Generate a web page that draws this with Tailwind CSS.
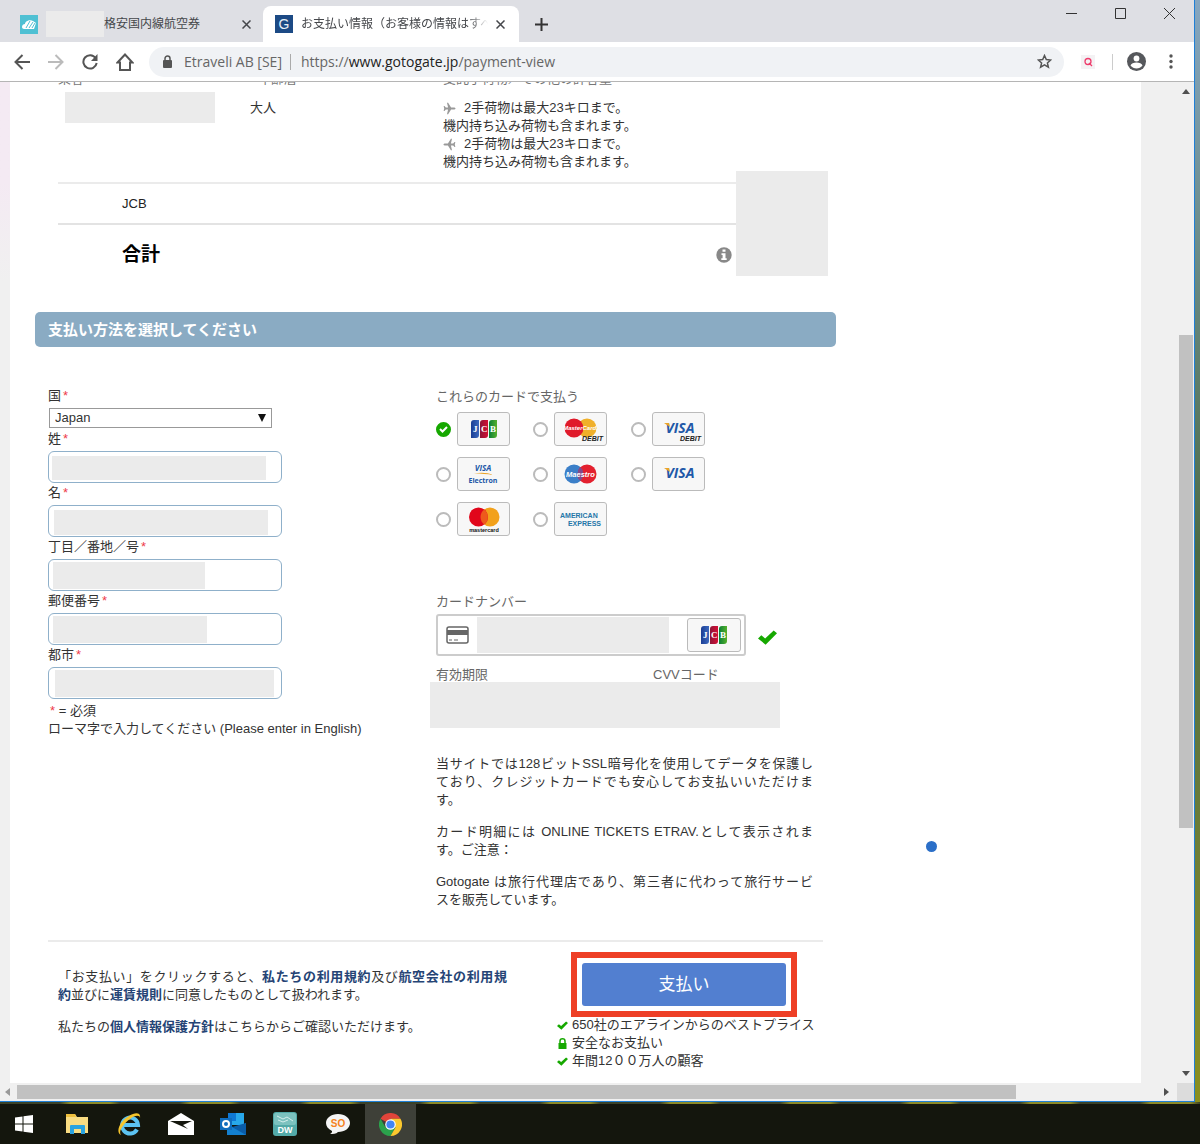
<!DOCTYPE html>
<html lang="ja">
<head>
    <meta charset="UTF-8">
    <meta name="viewport" content="width=device-width, initial-scale=1.0">
    <script src="https://cdn.jsdelivr.net/npm/@tailwindcss/browser@4"></script>
    <title>お支払い情報</title>
</head>
<body class="h-screen flex flex-col overflow-hidden bg-[#14160d] font-['Liberation_Sans','Noto_Sans_CJK_JP',sans-serif] text-[13px] leading-[18px] text-[#333]">
    <svg class="absolute w-0 h-0">
        <defs>
            <linearGradient id="jcbBlue"><stop offset="0" stop-color="#1b3d94"/><stop offset="1" stop-color="#3a68bd"/></linearGradient>
            <linearGradient id="jcbRed"><stop offset="0" stop-color="#8e1537"/><stop offset="1" stop-color="#d40f35"/></linearGradient>
            <linearGradient id="jcbGreen"><stop offset="0" stop-color="#0b7f35"/><stop offset="1" stop-color="#55b02c"/></linearGradient>
        </defs>
        <symbol id="jcb" viewBox="0 0 26 18">
            <path d="M3 0h5v15a3 3 0 0 1-3 3H0V3a3 3 0 0 1 3-3z" fill="url(#jcbBlue)"/>
            <path d="M12 0h5v15a3 3 0 0 1-3 3H9V3a3 3 0 0 1 3-3z" fill="url(#jcbRed)"/>
            <path d="M21 0h5v15a3 3 0 0 1-3 3h-5V3a3 3 0 0 1 3-3z" fill="url(#jcbGreen)"/>
            <g fill="#fff" font-family="Liberation Serif" font-weight="700" font-size="9"><text x="2" y="12">J</text><text x="10" y="12">C</text><text x="19" y="12">B</text></g>
        </symbol>
        <symbol id="check" viewBox="0 0 20 15"><path d="M0 8.500l3.500-3.500 4 3.500L16.500 0 20 3 8 15z" fill="#16a800"/></symbol>
        <symbol id="plane" viewBox="0 0 14 14"><path d="M13.500 7c0-.7-1-1.200-2-1.200H8.700L5.500.8H4.300l1.200 5H3L1.600 4.200H.7L1.300 7 .7 9.800h.9L3 8.200h2.500l-1.200 5h1.200l3.200-5h2.800c1 0 2-.5 2-1.200z" fill="#999"/></symbol>
    </svg>

    <div class="flex-1 min-h-0 flex bg-linear-to-b from-[#86a6c0] via-[#4d6b45] to-[#8a8f1e]">
        <div class="flex-1 min-w-0 flex flex-col border-r border-b border-[#1f7fd6] bg-white">
            <!-- tabs -->
            <div class="h-[42px] flex items-end bg-[#dedfe4] shrink-0">
                <div class="w-[263px] h-9 flex items-center pl-5 pr-3 text-xs text-[#45474b]">
                    <svg class="w-[18px] h-[19px]" viewBox="0 0 18 19"><rect width="18" height="19" fill="#4fc0d3"/><path d="M2 12c0-2 1.500-3 3-3 0-3 5-5 8-3l3 2-2 6H4c-1 0-2-1-2-2z" fill="#fff"/><path d="M6 13l4-7m-1 7l4-6m-1 6l3-5" stroke="#4fc0d3"/></svg>
                    <span class="ml-2 w-[58px] h-[26px] bg-[#ebebeb]"></span>
                    <span class="flex-1 whitespace-nowrap">格安国内線航空券</span>
                    <button aria-label="閉じる"><svg class="w-[9px] h-[9px]" viewBox="0 0 9 9"><path d="M.5.5l8 8m0-8l-8 8" stroke="#45474b" stroke-width="1.500"/></svg></button>
                </div>
                <div class="w-[256px] h-9 flex items-center pl-3 pr-3 rounded-t-lg bg-white text-xs text-[#45474b]">
                    <svg class="w-[18px] h-[18px]" viewBox="0 0 18 18"><rect width="18" height="18" fill="#1c4a85"/><text x="9" y="14" text-anchor="middle" fill="#e8eef5" font-size="14">G</text></svg>
                    <span class="ml-2 w-[187px] overflow-hidden whitespace-nowrap mask-r-from-90%">お支払い情報（お客様の情報はすべ</span>
                    <button class="ml-2" aria-label="閉じる"><svg class="w-[9px] h-[9px]" viewBox="0 0 9 9"><path d="M.5.5l8 8m0-8l-8 8" stroke="#45474b" stroke-width="1.500"/></svg></button>
                </div>
                <button class="self-center ml-4 mt-1.5" aria-label="新しいタブ"><svg class="w-[13px] h-[13px]" viewBox="0 0 13 13"><path d="M6.500 0v13M0 6.500h13" stroke="#333" stroke-width="2"/></svg></button>
                <div class="self-start ml-auto mt-2 mr-[19px] flex gap-[38px]">
                    <svg class="w-[11px] h-[11px]" viewBox="0 0 11 11"><path d="M0 5.500h11" stroke="#333"/></svg>
                    <svg class="w-[11px] h-[11px]" viewBox="0 0 11 11"><path d="M.5.5h10v10H.5z" fill="none" stroke="#333"/></svg>
                    <svg class="w-[11px] h-[11px]" viewBox="0 0 11 11"><path d="M0 0l11 11m0-11L0 11" stroke="#333"/></svg>
                </div>
            </div>

            <!-- toolbar -->
            <div class="h-10 shrink-0 flex items-center border-b border-[#b5b5b5] pl-[14px] pr-[21px] font-['Open_Sans',sans-serif]">
                <button aria-label="戻る"><svg class="w-4 h-4" viewBox="0 0 16 16"><path d="M16 8H2m6.500-7L1.500 8l7 7" fill="none" stroke="#555" stroke-width="2"/></svg></button>
                <button class="ml-[18px]" aria-label="進む"><svg class="w-4 h-4" viewBox="0 0 16 16"><path d="M0 8h14M7.500 1l7 7-7 7" fill="none" stroke="#bbb" stroke-width="2"/></svg></button>
                <button class="ml-[18px]" aria-label="再読み込み"><svg class="w-4 h-4" viewBox="0 0 16 16"><path d="M13.600 4A6.700 6.700 0 1 0 14.700 9" fill="none" stroke="#555" stroke-width="2"/><path d="M15.500 0v7H9z" fill="#555"/></svg></button>
                <button class="ml-[18px]" aria-label="ホーム"><svg class="w-[18px] h-[18px]" viewBox="0 0 18 18"><path d="M1.500 9.500L9 1.500l7.500 8H14V17H4V9.500z" fill="none" stroke="#555" stroke-width="2"/></svg></button>
                <div class="ml-[15px] flex-1 h-[30px] rounded-full bg-[#f0f2f5] flex items-center pl-[14px] pr-3 text-sm text-[#666]">
                    <svg class="w-[9px] h-[13px]" viewBox="0 0 9 13"><rect y="5" width="9" height="8" rx="1" fill="#555"/><path d="M2 5V3.500a2.500 2.500 0 0 1 5 0V5" fill="none" stroke="#555" stroke-width="1.500"/></svg>
                    <span class="ml-3 whitespace-nowrap">Etraveli AB [SE]</span>
                    <span class="ml-2 mr-[10px] w-px h-4 bg-[#aaa]"></span>
                    <span class="whitespace-nowrap">https://<span class="text-[#222]">www.gotogate.jp</span>/payment-view</span>
                    <svg class="ml-auto w-[15px] h-[15px]" viewBox="0 0 15 15"><path d="M7.500 1.500l1.800 4 4.400.5-3.300 2.900 1 4.300-3.900-2.300-3.900 2.300 1-4.300L1.300 6l4.400-.5z" fill="none" stroke="#555" stroke-width="1.500"/></svg>
                </div>
                <svg class="ml-4 w-4 h-4" viewBox="0 0 16 16"><rect x="1" y="1" width="14" height="14" fill="#f4f2f4"/><circle cx="8" cy="7.500" r="3" fill="none" stroke="#ee3c6c" stroke-width="1.300"/><path d="M9 9l3 3" stroke="#ee3c6c" stroke-width="1.300"/></svg>
                <span class="ml-4 w-px h-4 bg-[#ccc]"></span>
                <svg class="ml-[14px] w-[19px] h-[19px]" viewBox="0 0 19 19"><circle cx="9.500" cy="9.500" r="9.500" fill="#56585c"/><circle cx="9.500" cy="6.500" r="2.900" fill="#fff"/><path d="M3.500 13.500c1-4 11-4 12 0-3 4-9 4-12 0z" fill="#fff"/></svg>
                <svg class="ml-[23px] w-1 h-[15px]" viewBox="0 0 4 15"><circle cx="2" cy="2" r="1.700" fill="#555"/><circle cx="2" cy="7.500" r="1.700" fill="#555"/><circle cx="2" cy="13" r="1.700" fill="#555"/></svg>
            </div>

            <!-- page and vertical scrollbar -->
            <div class="flex-1 min-h-0 flex bg-[#f0f0f0]">
                <div class="w-[10px] shrink-0 bg-linear-to-b from-[#f4eaf3] from-10% to-[#f0f0f0] to-20%"></div>
                <main class="relative flex-1 min-w-0 overflow-hidden bg-white pl-[25px]">
                    <div class="w-full max-w-[801px] flex flex-col">
                        <div class="relative -mt-3 ml-[23px] mr-2">
                            <table class="w-full table-fixed text-left">
                                <colgroup><col class="w-48"><col class="w-[193px]"><col></colgroup>
                                <thead class="text-[#777]">
                                    <tr class="h-[29px] align-top">
                                        <th class="p-0 font-normal">乗客</th>
                                        <th class="p-0 pl-2 font-normal">年齢層</th>
                                        <th class="p-0 font-normal">受託手荷物／その他の許容量</th>
                                    </tr>
                                </thead>
                                <tbody>
                                    <tr class="h-[84px] align-top">
                                        <td class="p-0"><div class="-mt-[7px] ml-[7px] w-[150px] h-[31px] bg-[#ebebeb]"></div></td>
                                        <td class="p-0">大人</td>
                                        <td class="p-0">
                                            <div class="flex items-center gap-2"><svg class="w-[13px] h-[13px]"><use href="#plane"/></svg>2手荷物は最大23キロまで。</div>
                                            <div>機内持ち込み荷物も含まれます。</div>
                                            <div class="flex items-center gap-2"><svg class="w-[13px] h-[13px] -scale-x-100"><use href="#plane"/></svg>2手荷物は最大23キロまで。</div>
                                            <div>機内持ち込み荷物も含まれます。</div>
                                        </td>
                                    </tr>
                                    <tr class="h-[41px] border-t-2 border-[#ebebeb] text-[#222]"><td colspan="3" class="p-0 pl-16">JCB</td></tr>
                                    <tr class="h-[60px] border-t-2 border-[#e3e3e3] text-black">
                                        <td class="p-0 pl-16 text-[19px] font-bold">合計</td>
                                        <td colspan="2" class="p-0 pr-24">
                                            <svg class="ml-auto w-4 h-4" viewBox="0 0 16 16"><circle cx="8" cy="8" r="7.700" fill="#888"/><path d="M6.500 2.500h3v2.300h-3zM5.500 6.200h4v5h1.200V13H5.300v-1.800h1.300V8H5.500z" fill="#fff"/></svg>
                                        </td>
                                    </tr>
                                </tbody>
                            </table>
                            <div class="absolute right-0 bottom-2 w-[92px] h-[105px] bg-[#ebebeb]"></div>
                        </div>

                        <h2 class="mt-7 h-[35px] flex items-center rounded-[5px] bg-[#8aabc3] pl-[13px] text-[15px] font-bold text-white">支払い方法を選択してください</h2>

                        <form class="mt-10">
                            <div class="flex pl-[13px]">
                                <div class="w-[388px] shrink-0">
                                    <label class="block" for="country">国<span class="ml-0.5 text-[#ee3b4b]">*</span></label>
                                    <div class="relative mt-[3px] mb-0.5 ml-px w-[223px]">
                                        <select id="country" class="block appearance-none w-full h-5 border border-[#999] pl-[5px] bg-white"><option>Japan</option></select>
                                        <svg class="absolute right-[6px] top-[6px] w-2 h-2" viewBox="0 0 8 8"><path d="M0 0h8L4 8z" fill="#111"/></svg>
                                    </div>
                                    <label class="block" for="lastName">姓<span class="ml-0.5 text-[#ee3b4b]">*</span></label>
                                    <div class="relative mt-[3px] mb-px w-[234px]">
                                        <input id="lastName" type="text" class="block w-full h-8 rounded-md border border-[#8fb0ca]">
                                        <span class="absolute left-1 top-[5px] w-[214px] h-6 bg-[#ebebeb]"></span>
                                    </div>
                                    <label class="block" for="firstName">名<span class="ml-0.5 text-[#ee3b4b]">*</span></label>
                                    <div class="relative mt-[3px] mb-px w-[234px]">
                                        <input id="firstName" type="text" class="block w-full h-8 rounded-md border border-[#8fb0ca]">
                                        <span class="absolute left-[6px] top-[5px] w-[214px] h-[25px] bg-[#ebebeb]"></span>
                                    </div>
                                    <label class="block" for="street">丁目／番地／号<span class="ml-0.5 text-[#ee3b4b]">*</span></label>
                                    <div class="relative mt-[3px] mb-px w-[234px]">
                                        <input id="street" type="text" class="block w-full h-8 rounded-md border border-[#8fb0ca]">
                                        <span class="absolute left-[5px] top-[3px] w-[152px] h-[27px] bg-[#ebebeb]"></span>
                                    </div>
                                    <label class="block" for="zip">郵便番号<span class="ml-0.5 text-[#ee3b4b]">*</span></label>
                                    <div class="relative mt-[3px] mb-px w-[234px]">
                                        <input id="zip" type="text" class="block w-full h-8 rounded-md border border-[#8fb0ca]">
                                        <span class="absolute left-[5px] top-[3px] w-[154px] h-[27px] bg-[#ebebeb]"></span>
                                    </div>
                                    <label class="block" for="city">都市<span class="ml-0.5 text-[#ee3b4b]">*</span></label>
                                    <div class="relative mt-[3px] mb-[3px] w-[234px]">
                                        <input id="city" type="text" class="block w-full h-8 rounded-md border border-[#8fb0ca]">
                                        <span class="absolute left-[7px] top-[3px] w-[219px] h-[27px] bg-[#ebebeb]"></span>
                                    </div>
                                    <p class="pl-0.5"><span class="text-[#ee3b4b]">*</span> = 必須</p>
                                    <p>ローマ字で入力してください (Please enter in English)</p>
                                </div>

                                <div class="w-[377px] pt-px">
                                    <p class="text-[#666]">これらのカードで支払う</p>
                                    <div class="mt-1.5 w-[292px] grid grid-cols-3 gap-y-[11px]">
                                        <label class="flex items-center gap-[6px]">
                                            <span class="relative"><input type="radio" name="card" checked class="block appearance-none w-[15px] h-[15px] rounded-full border-2 border-[#bbb] checked:border-[#16a800] checked:bg-[#16a800]"><svg class="absolute left-[3px] top-1 w-[9px] h-[7px]" viewBox="0 0 9 7"><path d="M1 3l2.500 2.500L8 1" fill="none" stroke="#fff" stroke-width="2"/></svg></span>
                                            <span class="w-[53px] h-[34px] flex items-center justify-center rounded-[3px] border border-[#bbb] bg-[#f7f7f7]"><svg class="w-[26px] h-[18px]"><use href="#jcb"/></svg></span>
                                        </label>
                                        <label class="flex items-center gap-[6px]">
                                            <input type="radio" name="card" class="appearance-none w-[15px] h-[15px] rounded-full border-2 border-[#bbb]">
                                            <svg class="w-[53px] h-[34px] rounded-[3px] border border-[#bbb] bg-[#f7f7f7]" viewBox="1 1 51 32"><circle cx="33" cy="16" r="9.500" fill="#f0b02a"/><circle cx="20" cy="16" r="9.500" fill="#e01a2b"/><text x="26.500" y="18" text-anchor="middle" font-size="6" font-weight="700" font-style="italic" fill="#fff">MasterCard.</text><text x="49" y="29" text-anchor="end" font-size="7" font-weight="700" font-style="italic" fill="#222">DEBIT</text></svg>
                                        </label>
                                        <label class="flex items-center gap-[6px]">
                                            <input type="radio" name="card" class="appearance-none w-[15px] h-[15px] rounded-full border-2 border-[#bbb]">
                                            <svg class="w-[53px] h-[34px] rounded-[3px] border border-[#bbb] bg-[#f7f7f7]" viewBox="1 1 51 32"><text x="28" y="21" text-anchor="middle" font-family="Open Sans" font-size="14" font-weight="700" font-style="italic" fill="#2158a8">VISA</text><path d="M12 11h5l1 4z" fill="#eaa328"/><text x="49" y="29" text-anchor="end" font-size="7" font-weight="700" font-style="italic" fill="#222">DEBIT</text></svg>
                                        </label>
                                        <label class="flex items-center gap-[6px]">
                                            <input type="radio" name="card" class="appearance-none w-[15px] h-[15px] rounded-full border-2 border-[#bbb]">
                                            <svg class="w-[53px] h-[34px] rounded-[3px] border border-[#bbb] bg-[#f7f7f7]" viewBox="1 1 51 32"><text x="26" y="14" text-anchor="middle" font-family="Open Sans" font-size="8" font-weight="700" font-style="italic" fill="#2158a8">VISA</text><path d="M17 16.500c7-1.500 14-1 19 1.500-6-1-12-1.500-19-1.500z" fill="#eaa328"/><text x="26" y="26" text-anchor="middle" font-family="Open Sans" font-size="7" font-weight="700" fill="#2158a8">Electron</text></svg>
                                        </label>
                                        <label class="flex items-center gap-[6px]">
                                            <input type="radio" name="card" class="appearance-none w-[15px] h-[15px] rounded-full border-2 border-[#bbb]">
                                            <svg class="w-[53px] h-[34px] rounded-[3px] border border-[#bbb] bg-[#f7f7f7]" viewBox="1 1 51 32"><circle cx="20" cy="17" r="9.500" fill="#3b7fc8"/><circle cx="33" cy="17" r="9.500" fill="#e3202e"/><path d="M26.500 10.100a9.500 9.500 0 0 1 0 13.800 9.500 9.500 0 0 1 0-13.800z" fill="#824a8c"/><text x="26.500" y="19.500" text-anchor="middle" font-size="7.500" font-weight="700" font-style="italic" fill="#fff">Maestro</text></svg>
                                        </label>
                                        <label class="flex items-center gap-[6px]">
                                            <input type="radio" name="card" class="appearance-none w-[15px] h-[15px] rounded-full border-2 border-[#bbb]">
                                            <svg class="w-[53px] h-[34px] rounded-[3px] border border-[#bbb] bg-[#f7f7f7]" viewBox="1 1 51 32"><text x="28" y="21" text-anchor="middle" font-family="Open Sans" font-size="14" font-weight="700" font-style="italic" fill="#2158a8">VISA</text><path d="M12 11h5l1 4z" fill="#eaa328"/></svg>
                                        </label>
                                        <label class="flex items-center gap-[6px]">
                                            <input type="radio" name="card" class="appearance-none w-[15px] h-[15px] rounded-full border-2 border-[#bbb]">
                                            <svg class="w-[53px] h-[34px] rounded-[3px] border border-[#bbb] bg-[#f7f7f7]" viewBox="1 1 51 32"><circle cx="33" cy="15" r="9.500" fill="#f2a11b"/><circle cx="21.500" cy="15" r="9.500" fill="#e1061b"/><path d="M27.200 7.500a9.500 9.500 0 0 1 0 15 9.500 9.500 0 0 1 0-15z" fill="#ee5a1c"/><text x="27" y="29.500" text-anchor="middle" font-size="5.500" font-weight="700" fill="#111">mastercard</text></svg>
                                        </label>
                                        <label class="flex items-center gap-[6px]">
                                            <input type="radio" name="card" class="appearance-none w-[15px] h-[15px] rounded-full border-2 border-[#bbb]">
                                            <svg class="w-[53px] h-[34px] rounded-[3px] border border-[#bbb] bg-[#f7f7f7]" viewBox="1 1 51 32"><text x="6" y="16" font-size="7" font-weight="700" fill="#2476a8">AMERICAN</text><text x="47" y="24" text-anchor="end" font-size="7" font-weight="700" fill="#2476a8">EXPRESS</text></svg>
                                        </label>
                                    </div>

                                    <label class="block mt-[57px] text-[#666]" for="cardNumber">カードナンバー</label>
                                    <div class="mt-[3px] flex items-center">
                                        <div class="relative w-[310px] h-[42px]">
                                            <input id="cardNumber" type="text" class="block w-full h-full rounded-[3px] border-2 border-[#ccc]">
                                            <svg class="absolute left-[10px] top-3 w-[23px] h-[18px]" viewBox="0 0 23 18"><rect x="1" y="1" width="21" height="16" rx="2" fill="none" stroke="#666" stroke-width="1.500"/><path d="M1 4h21v5H1z" fill="#666"/><path d="M3 14h3m2 0h4" stroke="#666"/></svg>
                                            <span class="absolute left-[41px] top-[3px] w-48 h-9 bg-[#ebebeb]"></span>
                                            <span class="absolute right-[5px] top-1 w-[54px] h-[34px] flex items-center justify-center rounded-[3px] border border-[#bbb] bg-[#f7f7f7]"><svg class="w-[26px] h-[18px]"><use href="#jcb"/></svg></span>
                                        </div>
                                        <svg class="ml-3 mt-1 w-[19px] h-[15px]"><use href="#check"/></svg>
                                    </div>
                                    <div class="mt-[10px] flex text-[#666]"><span class="w-[217px]">有効期限</span><span>CVVコード</span></div>
                                    <div class="relative -mt-0.5 -ml-1.5 w-[350px] h-[46px] bg-[#ebebeb]"></div>

                                    <!-- full lines are spread to both edges -->
                                    <div class="mt-[27px] flex flex-col gap-[14px] whitespace-nowrap">
                                        <p><span class="block [text-align-last:justify]">当サイトでは128ビットSSL暗号化を使用してデータを保護し</span><span class="block [text-align-last:justify]">ており、クレジットカードでも安心してお支払いいただけま</span>す。</p>
                                        <p><span class="block [text-align-last:justify]">カード明細には ONLINE TICKETS ETRAV.として表示されま</span>す。ご注意：</p>
                                        <p><span class="block [text-align-last:justify]">Gotogate は旅行代理店であり、第三者に代わって旅行サービ</span>スを販売しています。</p>
                                    </div>
                                </div>
                            </div>

                            <div class="mt-[31px] ml-[13px] mr-[13px] flex justify-between border-t-2 border-[#ebebeb] pl-[10px]">
                                <div class="w-[449px] pt-[26px] flex flex-col gap-[14px] whitespace-nowrap">
                                    <p><span class="block [text-align-last:justify]">「お支払い」をクリックすると、<a href="#" class="font-bold text-[#254475]">私たちの利用規約</a>及び<a href="#" class="font-bold text-[#254475]">航空会社の利用規</a></span><a href="#" class="font-bold text-[#254475]">約</a>並びに<a href="#" class="font-bold text-[#254475]">運賃規則</a>に同意したものとして扱われます。</p>
                                    <p>私たちの<a href="#" class="font-bold text-[#254475]">個人情報保護方針</a>はこちらからご確認いただけます。</p>
                                </div>
                                <div class="w-[266px] pt-[10px]">
                                    <div class="ml-[14px] w-[226px] border-6 border-[#ee3f26] p-[5px]">
                                        <button type="submit" class="block w-full h-[43px] rounded-[3px] bg-[#527fd0] text-[17px] text-white">支払い</button>
                                    </div>
                                    <ul class="-mt-px">
                                        <li class="flex items-center gap-1"><svg class="w-[11px] h-[9px]"><use href="#check"/></svg>650社のエアラインからのベストプライス</li>
                                        <li class="flex items-center gap-1"><svg class="w-[11px] h-[11px]" viewBox="0 0 11 11"><path d="M1.500 5h8v6h-8z" fill="#16a800"/><path d="M3 5V3a2.500 2.200 0 0 1 5 0v2" fill="none" stroke="#16a800" stroke-width="1.500"/></svg>安全なお支払い</li>
                                        <li class="flex items-center gap-1"><svg class="w-[11px] h-[9px]"><use href="#check"/></svg>年間12００万人の顧客</li>
                                    </ul>
                                </div>
                            </div>
                        </form>
                    </div>
                    <span class="absolute left-[916px] top-[759px] w-[11px] h-[11px] rounded-full bg-[#2b6fc8]"></span>
                </main>
                <div class="w-9 shrink-0"></div>
                <div class="w-[17px] shrink-0 flex flex-col items-center py-[7px]">
                    <svg class="w-2 h-[5px]" viewBox="0 0 8 5"><path d="M0 5l4-5 4 5z" fill="#505050"/></svg>
                    <div class="w-full basis-[24.4%] shrink-0"></div>
                    <div class="w-[14px] basis-[50%] shrink-0 bg-[#c1c1c1]"></div>
                    <svg class="mt-auto w-2 h-[5px]" viewBox="0 0 8 5"><path d="M0 0l4 5 4-5z" fill="#505050"/></svg>
                </div>
            </div>

            <!-- horizontal scrollbar -->
            <div class="h-[18px] shrink-0 flex items-center bg-[#f0f0f0] pl-[5px]">
                <svg class="w-[5px] h-2" viewBox="0 0 5 8"><path d="M5 0L0 4l5 4z" fill="#999"/></svg>
                <div class="ml-[7px] w-[84%] h-[14px] bg-[#c1c1c1]"></div>
                <svg class="ml-auto mr-2 w-[5px] h-2" viewBox="0 0 5 8"><path d="M0 0l5 4-5 4z" fill="#505050"/></svg>
                <div class="w-[17px] h-full bg-[#dcdcdc]"></div>
            </div>
        </div>
        <div class="w-[5px]"></div>
    </div>
    <div class="h-0.5 shrink-0 bg-[repeating-linear-gradient(90deg,#3b4228_0px,#3b4228_60px,#8c8a28_70px,#8c8a28_110px,#3b4228_120px)]"></div>

    <!-- taskbar -->
    <nav class="h-10 shrink-0 flex">
        <button class="w-[51px] flex items-center justify-center pr-1" aria-label="スタート"><svg class="w-[18px] h-[18px]" viewBox="0 0 18 18"><path d="M0 2.500l7.500-1v7H0zM8.500 1.300L18 0v8.500H8.500zM0 9.500h7.500v7l-7.500-1zM8.500 9.500H18V18l-9.500-1.300z" fill="#fff"/></svg></button>
        <button class="w-[52px] flex items-center justify-center" aria-label="エクスプローラー"><svg class="w-6 h-5" viewBox="0 0 24 20"><path d="M1 0h9l2 3h11v16H1z" fill="#f9dc82"/><path d="M1 0h9l1 3H1z" fill="#eebf3d"/><path d="M5 20v-8q0-1 1-1h13q1 0 1 1v8h-4v-5H9v5z" fill="#2aa3e0"/></svg></button>
        <button class="w-[52px] flex items-center justify-center" aria-label="Internet Explorer"><svg class="w-6 h-6" viewBox="0 0 24 24"><path d="M20 17.500a8 8 0 1 1 1-4.500H7" fill="none" stroke="#5cc3f2" stroke-width="4"/><path d="M4 23C-2 20 3 9 12 4c6-4 12-4 11 2 0-3-5-3-10 1C6 12 1 20 4 23z" fill="#f5c52c"/></svg></button>
        <button class="w-[52px] flex items-center justify-center" aria-label="メール"><svg class="w-[26px] h-[22px]" viewBox="0 0 26 22"><path d="M0 8l13-8 13 8v14H0z" fill="#fff"/><path d="M2 8h22l-9 4 5 4-18-8z" fill="#14160d"/></svg></button>
        <button class="w-[52px] flex items-center justify-center" aria-label="Outlook"><svg class="w-[26px] h-6" viewBox="0 0 26 24"><path d="M8 1h16v12H8z" fill="#28a8ea"/><path d="M8 1h8v8H8z" fill="#0f78d4"/><path d="M7 12l10 5 9-6v12H7z" fill="#1380d0"/><path d="M26 11v12L12 15z" fill="#0a5ca8"/><rect y="6" width="12" height="12" fill="#0f6cbd"/><circle cx="6" cy="12" r="3" fill="none" stroke="#fff" stroke-width="2"/></svg></button>
        <button class="w-[52px] flex items-center justify-center" aria-label="DW"><svg class="w-6 h-6" viewBox="0 0 24 24"><rect width="24" height="24" rx="3" fill="#53aaa8"/><rect x="1" y="1" width="22" height="12" rx="2" fill="#7cc2bf"/><path d="M4 4l6 3 4-2 6 4M5 8l5 2 5-2" fill="none" stroke="#d5efed"/><text x="12" y="21" text-anchor="middle" font-size="9" font-weight="700" fill="#fff">DW</text></svg></button>
        <button class="w-[54px] flex items-center justify-center" aria-label="SO"><svg class="w-6 h-5" viewBox="0 0 24 20"><path d="M12 0c7 0 12 4 12 9s-5 9-12 9c-2 2-5 2-8 2 2-1 2-2 2-3C2 15 0 12 0 9c0-5 5-9 12-9z" fill="#f5f5f5"/><text x="12" y="13" text-anchor="middle" font-size="10" font-weight="700" fill="#f58220">SO</text></svg></button>
        <button class="w-[51px] flex items-center justify-center bg-[#3e4038]" aria-label="Chrome"><svg class="w-[23px] h-[23px]" viewBox="0 0 24 24"><path d="M12 12L1.600 6A12 12 0 0 1 22.400 6H12z" fill="#e0443a"/><path d="M12 12l5.200 3L12 24A12 12 0 0 1 1.600 6L6.800 15z" fill="#2ba24c"/><path d="M12 6h10.400A12 12 0 0 1 12 24l5.200-9z" fill="#fbc82e"/><circle cx="12" cy="12" r="5.500" fill="#fff"/><circle cx="12" cy="12" r="4.300" fill="#4285f4"/></svg></button>
    </nav>
</body>
</html>
